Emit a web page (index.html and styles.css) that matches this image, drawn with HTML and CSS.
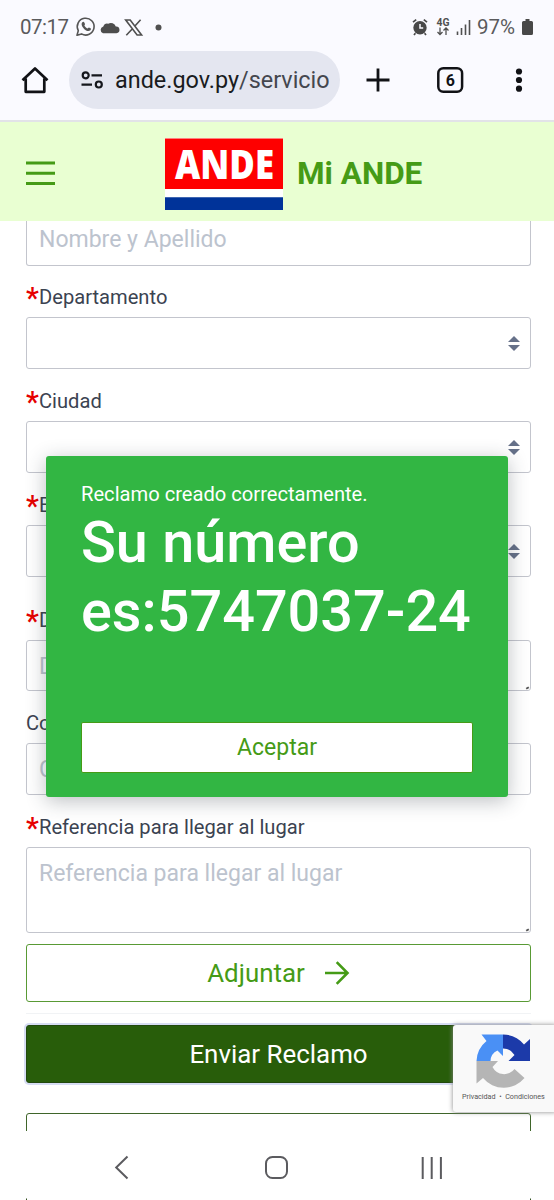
FILE: index.html
```
<!DOCTYPE html>
<html lang="es">
<head>
<meta charset="utf-8">
<title>Mi ANDE</title>
<link rel="stylesheet" href="styles.css">
</head>
<body>
<div class="screen">
  <div class="status">
    <span class="clock">07:17</span>
    <svg class="status-left" width="90" height="24" viewBox="0 0 90 24">
      <path d="M1 20.300 2.300 15.600A8.400 8.400 0 1 1 5.500 18.900Z" fill="none" stroke="#555" stroke-width="1.600" stroke-linejoin="round"/>
      <path d="M6.300 7.300c.8-.9 1.600-.7 2 .1l.7 1.600c.2.5-.7 1.200-.6 1.500.7 1.400 1.700 2.300 3.100 2.900.4.1 1-1 1.400-.9l1.700.8c.6.4.3 1.400-.2 1.900-1.800 1.600-4.600.4-6.300-1.300C6.300 12 4.700 9.300 6.300 7.300Z" fill="#555"/>
      <path d="M27 18.200a3.500 3.500 0 0 1 .3-6.700 4.200 4.200 0 0 1 4.900-2.800 5.200 5.200 0 0 1 7.600 2.900 3.300 3.300 0 0 1 .7 6.600Z" fill="#4d4d4d"/>
      <path d="M49.700 5h4.500l11.400 15h-4.500ZM50.300 20.300l6.600-7M58.700 11.200l5.900-6.500" fill="none" stroke="#505050" stroke-width="1.600"/>
      <circle cx="82.500" cy="12.500" r="3" fill="#505050"/>
    </svg>
    <svg class="status-right" width="62" height="24" viewBox="0 0 62 24">
      <circle cx="9" cy="12.800" r="6.700" fill="#484848"/>
      <path d="M2 7.200 5.200 4.600M16 7.200l-3.200-2.600M4.400 18.200 3 20M13.600 18.200 15 20" stroke="#484848" stroke-width="1.700"/>
      <path d="M9 9v4h3.200" fill="none" stroke="#fafaff" stroke-width="1.500"/>
      <text x="25.500" y="10.500" class="net" textLength="13" lengthAdjust="spacingAndGlyphs">4G</text>
      <path d="M29 12.500v7M26.500 17l2.500 2.500 2.500-2.500M35 20v-7M32.500 15.500l2.500-2.500 2.500 2.500" fill="none" stroke="#505050" stroke-width="1.300"/>
      <path d="M46.500 20v-3.500M50.500 20v-7M54.500 20v-10.500M58.500 20V5" stroke="#505050" stroke-width="1.600"/>
    </svg>
    <span class="pct">97%</span>
    <svg width="12" height="18" viewBox="0 0 12 18"><path d="M3.500 1h4v2h2a1.500 1.500 0 0 1 1.500 1.500v11a1.500 1.500 0 0 1-1.500 1.500h-8A1.500 1.500 0 0 1 0 15.500v-11A1.500 1.500 0 0 1 1.500 3h2Z" fill="#484848"/></svg>
  </div>

  <div class="toolbar">
    <svg class="home" width="28" height="28" viewBox="0 0 28 28"><path d="M1.500 14.200 14 2.500l12.500 11.700M4.700 12.500v13.300h18.600V12.500" fill="none" stroke="#111216" stroke-width="2.700" stroke-linejoin="round"/></svg>
    <div class="address">
      <svg width="24" height="20" viewBox="0 0 24 20" fill="none" stroke="#15171c" stroke-width="2.200"><circle cx="5.700" cy="5.300" r="3"/><path d="M11.500 5.300h10.500M1.500 14.700H12"/><circle cx="18.800" cy="14.500" r="3"/></svg>
      <span class="url">ande.gov.py<span>/servicio</span></span>
    </div>
    <svg class="actions" width="170" height="30" viewBox="0 0 170 30">
      <path d="M1.500 15h23M13 3.500v23" stroke="#111216" stroke-width="2.800"/>
      <rect x="73.300" y="3.200" width="23.800" height="23.600" rx="5" fill="none" stroke="#111216" stroke-width="2.500"/>
      <text x="85.300" y="20.500" class="tab-count">6</text>
      <g fill="#111216"><circle cx="154" cy="6.500" r="3.100"/><circle cx="154" cy="15" r="3.100"/><circle cx="154" cy="23.700" r="3.100"/></g>
    </svg>
  </div>

  <header class="site-header">
    <svg class="menu" width="29" height="24" viewBox="0 0 29 24"><path d="M0 2h29M0 12.200h29M0 22.400h29" stroke="#459b16" stroke-width="3"/></svg>
    <svg class="logo" width="118" height="72" viewBox="0 0 118 72">
      <path fill="#fff" d="M0 0h118v72H0z"/>
      <path fill="#fe0000" d="M0 .5h118V51H0z"/>
      <path fill="#003399" d="M0 59.300h118V72H0z"/>
      <text x="10" y="40.700" class="logo-text" textLength="99" lengthAdjust="spacingAndGlyphs">ANDE</text>
    </svg>
    <h1 class="site-title">Mi ANDE</h1>
  </header>

  <main class="form">
    <div class="control control-first">Nombre y Apellido</div>
    <label class="label"><b>*</b>Departamento</label>
    <div class="control select"><i class="sort"></i></div>
    <label class="label"><b>*</b>Ciudad</label>
    <div class="control select"><i class="sort"></i></div>
    <label class="label"><b>*</b>B</label>
    <div class="control select"><i class="sort"></i></div>
    <label class="label label-wide"><b>*</b>D</label>
    <div class="control area-short">D<i class="grip"></i></div>
    <label class="label">Co</label>
    <div class="control">C</div>
    <label class="label"><b>*</b>Referencia para llegar al lugar</label>
    <div class="control area">Referencia para llegar al lugar<i class="grip"></i></div>
    <div class="button attach"><span>Adjuntar</span>
      <svg width="26" height="26" viewBox="0 0 26 26"><path d="M1 13h22M12.700 2.200 23.500 13 12.700 23.800" fill="none" stroke="#459b16" stroke-width="2.600"/></svg>
    </div>
    <hr class="rule">
    <div class="button submit">Enviar Reclamo</div>
    <div class="button next"></div>
  </main>

  <nav class="navbar">
    <svg width="554" height="69" viewBox="0 0 554 69" fill="none" stroke="#5b5b5f" stroke-width="2">
      <path d="M127.500 25.500 116.200 36.500l11.300 11"/>
      <rect x="266" y="26" width="21" height="21" rx="6.500"/>
      <path d="M422.700 26v22M431.700 26v22M440.900 26v22"/>
      <path d="M26.500 67.500V69M530.500 67.500V69" stroke-width="1" stroke="#31501e"/>
    </svg>
  </nav>

  <section class="dialog">
    <p class="dialog-note">Reclamo creado correctamente.</p>
    <h2 class="dialog-title">Su número<br><span>es:5747037-24</span></h2>
    <div class="accept">Aceptar</div>
  </section>

  <aside class="captcha">
    <svg width="54" height="54" viewBox="0 0 54 54">
      <path fill="#4a90f5" d="M.5 27A27 27 0 0 1 10.500 7L5.500.5H27V22l-5.500-5.500A12 12 0 0 0 14.500 27Z"/>
      <path fill="#1c3aa9" d="M27 .5a27 27 0 0 1 21 10L54 5v22H32.500l6-6A13 13 0 0 0 27 14.500Z"/>
      <path fill="#b5b5b5" d="M.5 27H22l-5.500 6a13 13 0 0 0 22 2l10 9A27 27 0 0 1 7 44L.5 49.500Z"/>
    </svg>
    <span class="legal">Privacidad&nbsp; • &nbsp;Condiciones</span>
  </aside>
</div>
</body>
</html>
```

FILE: styles.css
```
* { box-sizing: border-box; }
body { margin: 0; background: #fff; font-family: Roboto, "Liberation Sans", sans-serif; }
svg { display: block; flex: none; overflow: visible; }
.screen { position: relative; width: 554px; height: 1200px; overflow: hidden; display: flex; flex-direction: column; }

.status { flex: none; height: 51px; padding-left: 20px; display: flex; align-items: center; background: #fafaff; color: #5a5a5c; font-size: 20.500px; line-height: 24px; padding-top: 2px; }
.clock { width: 49px; margin-right: 7px; letter-spacing: -.5px; }
.status-right { margin-left: 245px; }
.pct { width: 42px; margin: 0 3px 0 4px; letter-spacing: 0; }
.net { font-size: 10px; font-weight: 700; fill: #505050; }

.toolbar { flex: none; height: 71px; padding-left: 21px; display: flex; align-items: flex-start; background: #fafaff; border-bottom: 2px solid #e2e3e8; }
.home { margin-top: 15px; }
.address { width: 271px; height: 58px; margin-left: 20px; padding-left: 11px; display: flex; align-items: center; border-radius: 29px; background: #e4e6f0; }
.url { margin-left: 11px; font-size: 23.400px; color: #191b20; white-space: nowrap; }
.url span { color: #44474e; }
.actions { margin: 14px 0 0 25px; }
.tab-count { font-size: 16px; font-weight: 700; fill: #111216; text-anchor: middle; }

.site-header { flex: none; height: 99px; padding-left: 26px; display: flex; align-items: flex-start; background: #e9ffd2; }
.menu { margin-top: 39px; }
.logo { margin: 16px 0 0 110px; }
.logo-text { font: 800 41px "Open Sans", sans-serif; fill: #fff; }
.site-title { margin: 33px 0 0 14px; font-size: 31.500px; line-height: 38px; font-weight: 700; color: #459b16; white-space: nowrap; }

.form { flex: none; height: 910px; padding: 0 23px 0 26px; overflow: hidden; display: flex; flex-direction: column; }
.form > * { flex: none; }
.label { height: 52px; padding-top: 21px; display: flex; font-size: 20.150px; line-height: 22px; color: #3b4351; white-space: nowrap; }
.label b { width: 13px; margin-top: -3px; font-size: 29px; line-height: 30px; font-weight: 500; color: #e60000; }
.label-wide { height: 63px; padding-top: 32px; }
.control { position: relative; height: 52px; padding: 0 12px; border: 1px solid #c3c5cd; border-radius: 3px; font-size: 23px; line-height: 51px; color: #bcc3ce; white-space: nowrap; }
.control-first { height: 45px; margin-bottom: -1px; border-top: 0; border-radius: 0 0 3px 3px; line-height: 38px; }
.select { display: flex; justify-content: flex-end; align-items: center; padding-right: 10px; }
.sort { width: 12px; height: 15px; display: flex; flex-direction: column; justify-content: space-between; }
.sort::before, .sort::after { content: ""; border: 6px solid transparent; }
.sort::before { border-top: 0; border-bottom-color: #667189; }
.sort::after { border-bottom: 0; border-top-color: #667189; }
.area-short { height: 51px; }
.area { height: 86px; }
.grip { position: absolute; right: 1px; bottom: 1px; width: 3px; height: 2px; background: #555; transform: rotate(-30deg); }
.button { height: 58px; display: flex; align-items: center; justify-content: center; border: 1px solid #599a35; border-radius: 3px; font-size: 25.900px; }
.attach { margin-top: 11px; padding-bottom: 1px; gap: 19px; color: #459b16; }
.rule { width: 100%; height: 1px; margin: 11px 0; border: 0; background: #f1f3f5; }
.submit { border-color: #22490d; background: #285d0a; color: #fff; box-shadow: 0 0 0 2px #d6dcf3; }
.next { margin-top: 30px; border-color: #3f652a; }

.navbar { flex: none; height: 69px; background: #fff; }

.dialog { position: absolute; left: 46px; top: 456px; width: 462px; height: 341px; padding: 26px 35px 24px; display: flex; flex-direction: column; border-radius: 3px; background: #32b643; color: #fff; box-shadow: 0 4px 20px rgba(48,55,66,.32); }
.dialog-note { margin: 0; font-size: 20.150px; line-height: 24px; white-space: nowrap; }
.dialog-title { margin: 2px 0 0; font-size: 57.600px; line-height: 69px; font-weight: 500; white-space: nowrap; }
.accept { height: 51px; margin-top: auto; display: flex; align-items: center; justify-content: center; border: 1px solid #459b16; border-radius: 2px; background: #fff; color: #459b16; font-size: 23px; }

.captcha { position: absolute; left: 453px; top: 1025px; width: 104px; height: 87px; padding-top: 9px; display: flex; flex-direction: column; border-radius: 3px; background: #f9f9f9; box-shadow: 0 0 5px #888; }
.captcha svg { margin-left: 23px; }
.legal { margin: 3px 0 0 9px; font-size: 7.200px; line-height: 12px; color: #555; white-space: nowrap; }
```
